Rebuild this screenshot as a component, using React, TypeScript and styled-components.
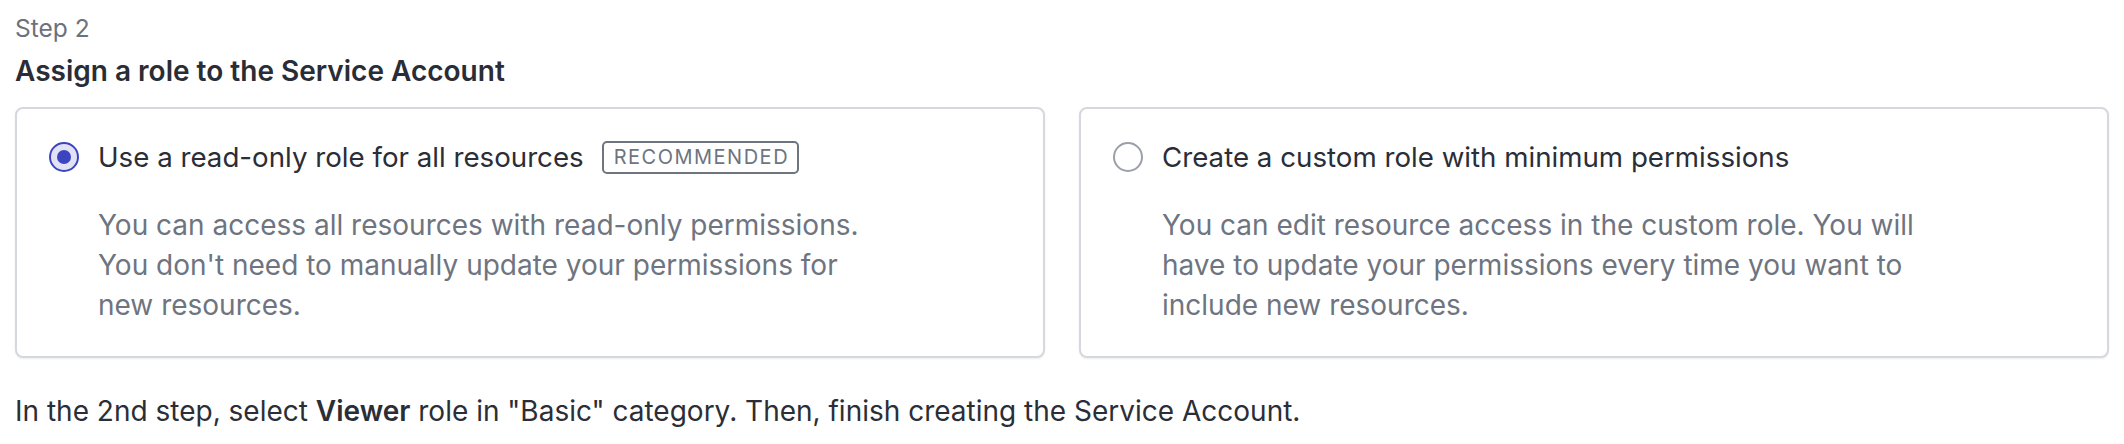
import React from "react";
import styled, { createGlobalStyle } from "styled-components";

const GlobalStyle = createGlobalStyle`
  html, body {
    margin: 0;
    padding: 0;
    background: #ffffff;
  }
  body {
    font-family: Inter, "Noto Sans", "Liberation Sans", sans-serif;
    -webkit-font-smoothing: antialiased;
  }
`;

const Page = styled.div`
  padding: 12px 15px 0 15px;
  display: flex;
  flex-direction: column;
`;

const StepLabel = styled.div`
  font-size: 24.5px;
  line-height: 32px;
  color: #6b717d;
`;

const Heading = styled.h2`
  margin: 7px 0 0 0;
  font-size: 28px;
  line-height: 40px;
  font-weight: 600;
  color: #2a2d35;
`;

const Options = styled.div`
  margin-top: 16px;
  display: grid;
  grid-template-columns: 1fr 1fr;
  column-gap: 34px;
`;

const Card = styled.label`
  display: flex;
  flex-direction: column;
  border: 2px solid #d5d8dd;
  border-radius: 8px;
  box-shadow: 0 1px 2px rgba(30, 35, 50, 0.08);
  padding: 28px 32px 31px 32px;
  background: #fff;
  cursor: pointer;
`;

const OptionRow = styled.div`
  display: flex;
  align-items: center;
  height: 40px;
`;

const Radio = styled.span<{ $checked: boolean }>`
  box-sizing: border-box;
  flex: none;
  width: 30px;
  height: 30px;
  border-radius: 50%;
  border: ${(p) => (p.$checked ? "2.5px solid #3c44c0" : "2px solid #9a9fa8")};
  background: ${(p) => (p.$checked ? "#e1e2f4" : "#ffffff")};
  display: flex;
  align-items: center;
  justify-content: center;
  &::after {
    content: "";
    display: ${(p) => (p.$checked ? "block" : "none")};
    width: 14px;
    height: 14px;
    border-radius: 50%;
    background: #3c44c0;
  }
`;

const OptionTitle = styled.span`
  margin-left: 19px;
  font-size: 27.7px;
  line-height: 40px;
  color: #2b2e36;
  white-space: nowrap;
`;

const Badge = styled.span`
  margin-left: 18px;
  box-sizing: border-box;
  height: 33px;
  padding: 0 8px 0 10px;
  display: inline-flex;
  align-items: center;
  border: 2px solid #6e7480;
  border-radius: 5px;
  font-size: 20px;
  letter-spacing: 1.5px;
  color: #6e7480;
  text-transform: uppercase;
`;

const Description = styled.p`
  margin: 28px 0 0 49px;
  max-width: 790px;
  font-size: 28px;
  line-height: 40px;
  color: #6e7480;
`;

const Note = styled.p`
  margin: 33px 0 0 0;
  font-size: 28px;
  line-height: 40px;
  color: #2b2e36;
  strong {
    font-weight: 600;
  }
`;

type Option = {
  id: string;
  title: string;
  badge?: string;
  description: string;
  checked: boolean;
};

const options: Option[] = [
  {
    id: "readonly",
    title: "Use a read-only role for all resources",
    badge: "Recommended",
    description:
      "You can access all resources with read-only permissions. You don't need to manually update your permissions for new resources.",
    checked: true,
  },
  {
    id: "custom",
    title: "Create a custom role with minimum permissions",
    description:
      "You can edit resource access in the custom role. You will have to update your permissions every time you want to include new resources.",
    checked: false,
  },
];

export default function App() {
  return (
    <>
      <GlobalStyle />
      <Page>
        <StepLabel>Step 2</StepLabel>
        <Heading>Assign a role to the Service Account</Heading>
        <Options>
          {options.map((o) => (
            <Card key={o.id}>
              <OptionRow>
                <Radio $checked={o.checked} />
                <OptionTitle>{o.title}</OptionTitle>
                {o.badge && <Badge>{o.badge}</Badge>}
              </OptionRow>
              <Description>{o.description}</Description>
            </Card>
          ))}
        </Options>
        <Note>
          In the 2nd step, select <strong>Viewer</strong> role in "Basic"
          category. Then, finish creating the Service Account.
        </Note>
      </Page>
    </>
  );
}
